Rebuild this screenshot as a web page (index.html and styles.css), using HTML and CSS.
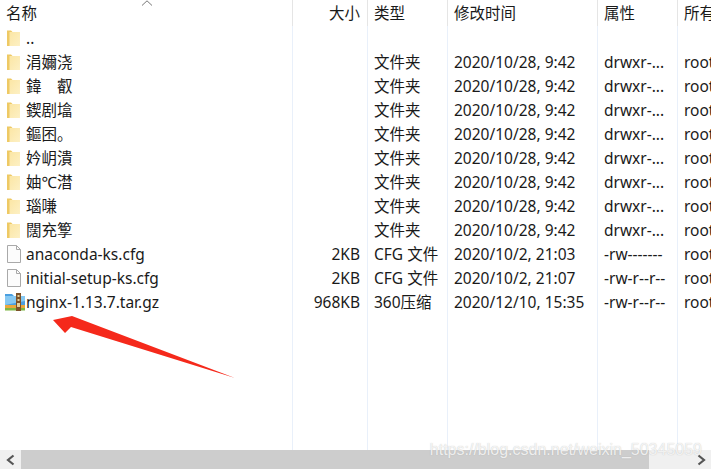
FILE: index.html
```html
<!DOCTYPE html>
<html lang="zh-CN">
<head>
  <meta charset="UTF-8" />
  <title>文件列表</title>
  <link rel="stylesheet" href="styles.css">
</head>
<body>
  <div class="window">
    <div class="row head">
      <div class="cell name">名称
        <svg class="sort" width="12" height="6" viewBox="0 0 12 6"><path d="M1 5.5 L6 .8 L11 5.5" fill="none" stroke="#777" stroke-width="1"/></svg>
      </div>
      <div class="cell size">大小</div>
      <div class="cell">类型</div>
      <div class="cell">修改时间</div>
      <div class="cell">属性</div>
      <div class="cell">所有</div>
    </div>

    <div class="list">
      <div class="row">
        <div class="cell name"><svg class="icon"><use href="#folder"/></svg>..</div>
        <div class="cell size"></div><div class="cell"></div><div class="cell"></div><div class="cell"></div><div class="cell"></div>
      </div>
      <div class="row">
        <div class="cell name"><svg class="icon"><use href="#folder"/></svg>涓嬭浇</div>
        <div class="cell size"></div><div class="cell">文件夹</div><div class="cell">2020/10/28, 9:42</div><div class="cell">drwxr-...</div><div class="cell">root</div>
      </div>
      <div class="row">
        <div class="cell name"><svg class="icon"><use href="#folder"/></svg>鍏&emsp;叡</div>
        <div class="cell size"></div><div class="cell">文件夹</div><div class="cell">2020/10/28, 9:42</div><div class="cell">drwxr-...</div><div class="cell">root</div>
      </div>
      <div class="row">
        <div class="cell name"><svg class="icon"><use href="#folder"/></svg>鍥剧墖</div>
        <div class="cell size"></div><div class="cell">文件夹</div><div class="cell">2020/10/28, 9:42</div><div class="cell">drwxr-...</div><div class="cell">root</div>
      </div>
      <div class="row">
        <div class="cell name"><svg class="icon"><use href="#folder"/></svg>鏂囨。</div>
        <div class="cell size"></div><div class="cell">文件夹</div><div class="cell">2020/10/28, 9:42</div><div class="cell">drwxr-...</div><div class="cell">root</div>
      </div>
      <div class="row">
        <div class="cell name"><svg class="icon"><use href="#folder"/></svg>妗岄潰</div>
        <div class="cell size"></div><div class="cell">文件夹</div><div class="cell">2020/10/28, 9:42</div><div class="cell">drwxr-...</div><div class="cell">root</div>
      </div>
      <div class="row">
        <div class="cell name"><svg class="icon"><use href="#folder"/></svg>妯℃澘</div>
        <div class="cell size"></div><div class="cell">文件夹</div><div class="cell">2020/10/28, 9:42</div><div class="cell">drwxr-...</div><div class="cell">root</div>
      </div>
      <div class="row">
        <div class="cell name"><svg class="icon"><use href="#folder"/></svg>瑙嗛</div>
        <div class="cell size"></div><div class="cell">文件夹</div><div class="cell">2020/10/28, 9:42</div><div class="cell">drwxr-...</div><div class="cell">root</div>
      </div>
      <div class="row">
        <div class="cell name"><svg class="icon"><use href="#folder"/></svg>闊充箰</div>
        <div class="cell size"></div><div class="cell">文件夹</div><div class="cell">2020/10/28, 9:42</div><div class="cell">drwxr-...</div><div class="cell">root</div>
      </div>
      <div class="row">
        <div class="cell name"><svg class="icon"><use href="#file"/></svg>anaconda-ks.cfg</div>
        <div class="cell size">2KB</div><div class="cell">CFG 文件</div><div class="cell">2020/10/2, 21:03</div><div class="cell">-rw-------</div><div class="cell">root</div>
      </div>
      <div class="row">
        <div class="cell name"><svg class="icon"><use href="#file"/></svg>initial-setup-ks.cfg</div>
        <div class="cell size">2KB</div><div class="cell">CFG 文件</div><div class="cell">2020/10/2, 21:07</div><div class="cell">-rw-r--r--</div><div class="cell">root</div>
      </div>
      <div class="row">
        <div class="cell name">
          <svg class="icon zip" viewBox="0 0 22 20">
            <path d="M1 2 H8 L10 4 H21 V14 H1 Z" fill="#4a9fe0"/>
            <path d="M1 4 H21 V9 L1 13 Z" fill="#86c8f2"/>
            <rect x="1" y="13" width="20" height="3" fill="#e9a83c"/>
            <rect x="1" y="16" width="20" height="2.5" fill="#7fb644"/>
            <rect x="12" y="1" width="5" height="18" fill="#7d5228"/>
            <path d="M13.5 3 h2 v2 h-2z M13.5 7 h2 v2 h-2z M13 11 h3 v4 h-3z" fill="#e6cf9a"/>
          </svg>nginx-1.13.7.tar.gz</div>
        <div class="cell size">968KB</div><div class="cell">360压缩</div><div class="cell">2020/12/10, 15:35</div><div class="cell">-rw-r--r--</div><div class="cell">root</div>
      </div>
      <div class="row filler">
        <div class="cell name"></div><div class="cell size"></div><div class="cell"></div><div class="cell"></div><div class="cell"></div><div class="cell"></div>
      </div>
    </div>

    <div class="scrollbar">
      <div class="scroll-btn"><svg width="12" height="12" viewBox="0 0 12 12"><path d="M8.5 1.5 L3 6 L8.5 10.5" fill="none" stroke="#555" stroke-width="2.2"/></svg></div>
      <div class="thumb"></div>
      <div class="track"></div>
      <div class="scroll-btn"><svg width="12" height="12" viewBox="0 0 12 12"><path d="M3.5 1.5 L9 6 L3.5 10.5" fill="none" stroke="#555" stroke-width="2.2"/></svg></div>
    </div>
  </div>

  <!-- red arrow drawn over the list -->
  <svg class="arrow" width="190" height="70" viewBox="0 0 190 70">
    <path d="M185 66 L22 4 L3 8 L15 21 L21 15 Z" fill="#f5291b"/>
  </svg>

  <div class="watermark">https://blog.csdn.net/weixin_50345059</div>

  <svg class="defs" width="0" height="0">
    <defs>
      <linearGradient id="folder-fill" x1="0" y1="0" x2="1" y2="1">
        <stop offset="0" stop-color="#fbe6a5"/>
        <stop offset="1" stop-color="#fdf0c4"/>
      </linearGradient>
    </defs>
    <symbol id="folder" viewBox="0 0 14 18">
      <path d="M0 1.5 H4 L5.5 3 V17 H0 Z" fill="#eec964"/>
      <path d="M2.5 3 H13 V17 H2.5 Z" fill="url(#folder-fill)"/>
    </symbol>
    <symbol id="file" viewBox="0 0 14 18">
      <path d="M.5 .5 H9.5 L13.5 4.5 V17.5 H.5 Z" fill="#fcfcfc" stroke="#a9a9a9"/>
      <path d="M9.5 .5 V4.5 H13.5" fill="none" stroke="#a9a9a9"/>
    </symbol>
  </svg>
</body>
</html>
```

FILE: styles.css
```css
body {
  margin: 0;
  width: 711px;
  height: 470px;
  overflow: hidden;
  position: relative;
  background-color: #fff;
  color: #1a1a1a;
  font-family: "Noto Sans", "Noto Sans CJK SC", sans-serif;
  font-size: 15.5px;
}

.window {
  display: flex;
  flex-direction: column;
  height: 470px;
}

.row {
  display: grid;
  grid-template-columns: 292px 75px 80px 150px 80px 1fr;
  height: 24px;
  line-height: 24px;
}

.head {
  height: 26px;
  line-height: 26px;
  flex-shrink: 0;
}

.list {
  flex: 1;
  display: flex;
  flex-direction: column;
  min-height: 0;
}

.filler {
  flex: 1;
}

.cell {
  padding-left: 6px;
  border-left: 1px solid #e9f0fa;
  white-space: nowrap;
  overflow: hidden;
  display: flex;
  align-items: center;
}

.head .cell {
  border-left-color: #e5e5e5;
}

.name,
.head .name {
  border-left: none;
  position: relative;
}

.size {
  justify-content: flex-end;
  padding: 0 7px 0 0;
}

.sort {
  position: absolute;
  left: 141px;
  top: 0;
}

.icon {
  width: 14px;
  height: 18px;
  margin: 0 5px 0 1px;
  flex-shrink: 0;
}

.zip {
  width: 22px;
  height: 20px;
  margin: 0 0 0 -2px;
}

.defs {
  position: absolute;
}

.scrollbar {
  display: flex;
  height: 19px;
  margin-bottom: 1px;
  flex-shrink: 0;
  background-color: #f0f0f0;
}

.scroll-btn {
  width: 21px;
  display: flex;
  align-items: center;
  justify-content: center;
  flex-shrink: 0;
}

.thumb {
  width: 628px;
  background-color: #cdcdcd;
}

.track {
  flex: 1;
}

.arrow {
  position: absolute;
  left: 50px;
  top: 312px;
}

.watermark {
  position: absolute;
  right: 9px;
  top: 441px;
  font-family: "Liberation Sans", sans-serif;
  font-size: 16px;
  color: rgba(255, 255, 255, 0.8);
  text-shadow: 0 0 1px rgba(150, 150, 150, 0.6);
}
```
